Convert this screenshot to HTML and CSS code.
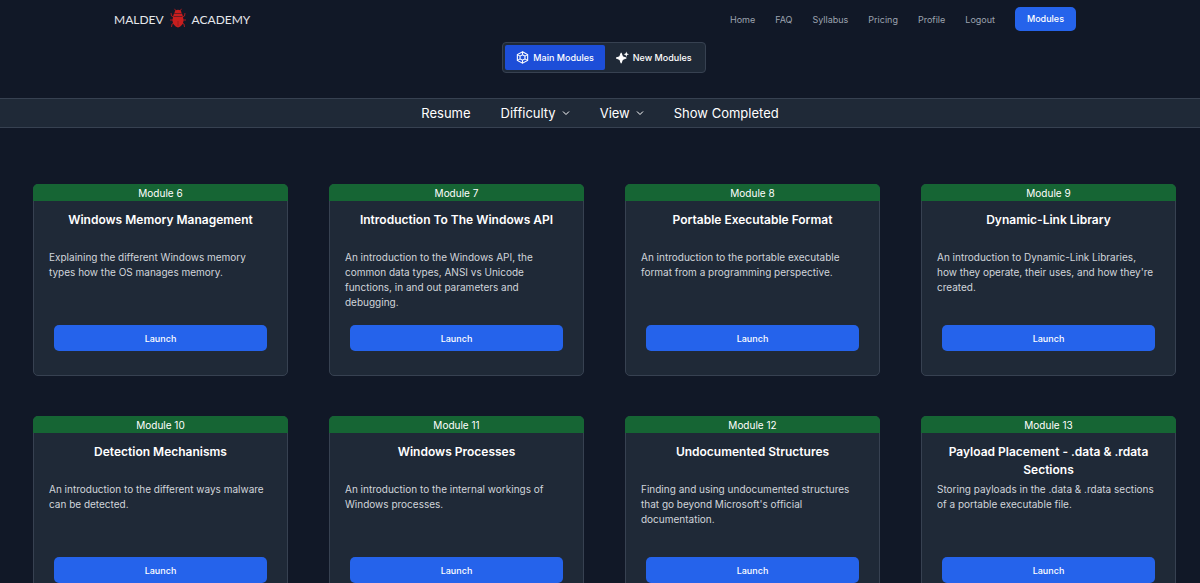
FILE: index.html
```html
<!DOCTYPE html>
<html lang="en">
<head>
    <meta charset="UTF-8">
    <meta name="viewport" content="width=device-width, initial-scale=1.0">
    <title>Maldev Academy - Modules</title>
    <link rel="stylesheet" href="styles.css">
</head>
<body>

    <!-- Header -->
    <header class="navbar">
        <a class="logo" href="#">
            <span>MALDEV</span>
            <svg class="bug" viewBox="0 0 18 20" aria-hidden="true">
                <g fill="none" stroke="#a51c20" stroke-width="1">
                    <path d="M7 3L5.500 0.800M11 3L12.500 0.800"/>
                    <path d="M5 9L2.500 8L2 5M13 9L15.500 8L16 5"/>
                    <path d="M4.500 12H1M13.500 12H17"/>
                    <path d="M5 15L3 16L2.500 19M13 15L15 16L15.500 19"/>
                </g>
                <path fill="#c81e1e" d="M5.500 5C5.500 0.800 12.500 0.800 12.500 5Z"/>
                <path fill="#c81e1e" d="M5 5.500H13L14 8.500H4Z"/>
                <path fill="#c81e1e" d="M4 9H14L14.500 12C14.500 15.500 12.500 18.500 9 19.500C5.500 18.500 3.500 15.500 3.500 12Z"/>
                <path fill="none" stroke="#8b1a20" stroke-width="0.800" d="M9 13V18"/>
            </svg>
            <span>ACADEMY</span>
        </a>
        <nav class="nav-links">
            <a href="#">Home</a>
            <a href="#">FAQ</a>
            <a href="#">Syllabus</a>
            <a href="#">Pricing</a>
            <a href="#">Profile</a>
            <a href="#">Logout</a>
            <a class="nav-button" href="#">Modules</a>
        </nav>
    </header>

    <!-- Main / New switch -->
    <div class="tabs-row">
        <div class="tabs">
            <button type="button" class="tab active">
                <svg class="tab-icon" viewBox="0 0 24 24" fill="none" stroke="currentColor" stroke-width="2" aria-hidden="true">
                    <path d="M12 1.500L21.500 6.700V17.300L12 22.500L2.500 17.300V6.700Z"/>
                    <path d="M12 7L16.500 9.500V14.500L12 17L7.500 14.500V9.500Z"/>
                    <path d="M12 1.500V7M12 17V22.500M2.500 6.700L7.500 9.500M16.500 14.500L21.500 17.300M21.500 6.700L16.500 9.500M7.500 14.500L2.500 17.300"/>
                </svg>
                Main Modules
            </button>
            <button type="button" class="tab">
                <svg class="tab-icon" viewBox="0 0 24 24" fill="currentColor" aria-hidden="true">
                    <path d="M9.500 4L12 10.500L18.500 13L12 15.500L9.500 22L7 15.500L0.500 13L7 10.500Z" stroke="currentColor" stroke-width="2" stroke-linejoin="round"/>
                    <path d="M19 1L20.300 4.700L24 6L20.300 7.300L19 11L17.700 7.300L14 6L17.700 4.700Z"/>
                </svg>
                New Modules
            </button>
        </div>
    </div>

    <!-- Filters -->
    <div class="toolbar">
        <button type="button">Resume</button>
        <button type="button">Difficulty
            <svg class="chevron" viewBox="0 0 8 8" aria-hidden="true"><path d="M1 2.500L4 5.500L7 2.500"/></svg>
        </button>
        <button type="button">View
            <svg class="chevron" viewBox="0 0 8 8" aria-hidden="true"><path d="M1 2.500L4 5.500L7 2.500"/></svg>
        </button>
        <button type="button">Show Completed</button>
    </div>

    <!-- Modules -->
    <main class="modules">
        <article class="card">
            <div class="card-number">Module 6</div>
            <h2>Windows Memory Management</h2>
            <p>Explaining the different Windows memory types how the OS manages memory.</p>
            <button type="button" class="launch">Launch</button>
        </article>
        <article class="card">
            <div class="card-number">Module 7</div>
            <h2>Introduction To The Windows API</h2>
            <p>An introduction to the Windows API, the common data types, ANSI vs Unicode functions, in and out parameters and debugging.</p>
            <button type="button" class="launch">Launch</button>
        </article>
        <article class="card">
            <div class="card-number">Module 8</div>
            <h2>Portable Executable Format</h2>
            <p>An introduction to the portable executable format from a programming perspective.</p>
            <button type="button" class="launch">Launch</button>
        </article>
        <article class="card">
            <div class="card-number">Module 9</div>
            <h2>Dynamic-Link Library</h2>
            <p>An introduction to Dynamic-Link Libraries, how they operate, their uses, and how they're created.</p>
            <button type="button" class="launch">Launch</button>
        </article>
        <article class="card">
            <div class="card-number">Module 10</div>
            <h2>Detection Mechanisms</h2>
            <p>An introduction to the different ways malware can be detected.</p>
            <button type="button" class="launch">Launch</button>
        </article>
        <article class="card">
            <div class="card-number">Module 11</div>
            <h2>Windows Processes</h2>
            <p>An introduction to the internal workings of Windows processes.</p>
            <button type="button" class="launch">Launch</button>
        </article>
        <article class="card">
            <div class="card-number">Module 12</div>
            <h2>Undocumented Structures</h2>
            <p>Finding and using undocumented structures that go beyond Microsoft's official documentation.</p>
            <button type="button" class="launch">Launch</button>
        </article>
        <article class="card">
            <div class="card-number">Module 13</div>
            <h2>Payload Placement - .data &amp; .rdata Sections</h2>
            <p>Storing payloads in the .data &amp; .rdata sections of a portable executable file.</p>
            <button type="button" class="launch">Launch</button>
        </article>
    </main>

</body>
</html>
```
FILE: styles.css
```css
* {
    box-sizing: border-box;
}
body {
    margin: 0;
    font-family: Inter, "Liberation Sans", sans-serif;
    background-color: #111827;
    color: #fff;
}
button {
    font-family: inherit;
    color: inherit;
    border: none;
    background: none;
    padding: 0;
    cursor: pointer;
}
a {
    color: inherit;
    text-decoration: none;
}

/* Header */
.navbar {
    display: flex;
    justify-content: space-between;
    align-items: center;
    height: 38px;
    padding: 0 124px 0 114px;
}
.logo {
    display: flex;
    align-items: center;
    gap: 5px;
    font-family: Lato, sans-serif;
    font-size: 12px;
    color: #e5e7eb;
}
.bug {
    width: 18px;
    height: 20px;
    margin-bottom: 3px;
}
.nav-links {
    display: flex;
    align-items: center;
    gap: 20px;
    font-size: 9px;
    color: #9ca3af;
}
.nav-button {
    padding: 6px 12px;
    border-radius: 5px;
    background-color: #2563eb;
    color: #fff;
    font-weight: 500;
    line-height: 12px;
}

/* Main / New switch */
.tabs-row {
    display: flex;
    justify-content: center;
    padding: 4px 0 25px 8px;
}
.tabs {
    display: flex;
    padding: 2px;
    border: 1px solid #374151;
    border-radius: 4px;
    background-color: #1f2937;
}
.tab {
    display: flex;
    align-items: center;
    gap: 4px;
    height: 25px;
    padding: 0 11px;
    border-radius: 2px;
    font-size: 9px;
    font-weight: 500;
}
.tab.active {
    background-color: #1d4ed8;
}
.tab-icon {
    width: 13px;
    height: 13px;
}

/* Filters */
.toolbar {
    display: flex;
    justify-content: center;
    gap: 30px;
    height: 30px;
    border: solid #374151;
    border-width: 1px 0;
    background-color: #1f2937;
}
.toolbar button {
    display: flex;
    align-items: center;
    gap: 6px;
    font-size: 13px;
}
.chevron {
    width: 8px;
    height: 8px;
    fill: none;
    stroke: currentColor;
}

/* Modules */
.modules {
    display: grid;
    grid-template-columns: repeat(4, 1fr);
    gap: 40px 41px;
    padding: 56px 24px 40px 33px;
}
.card {
    display: flex;
    flex-direction: column;
    border: 1px solid #374151;
    border-radius: 5px;
    background-color: #1f2937;
}
.card-number {
    margin: -1px -1px 0;
    padding-top: 1px;
    border-radius: 5px 5px 0 0;
    background-color: #166534;
    font-size: 10px;
    line-height: 16px;
    text-align: center;
}
.card h2 {
    min-height: 36px;
    margin: 10px 15px 3px;
    font-size: 12px;
    font-weight: 600;
    line-height: 18px;
    text-align: center;
}
.card p {
    min-height: 60px;
    margin: 0 18px 0 15px;
    font-size: 10px;
    line-height: 15px;
    color: #d1d5db;
}
.launch {
    height: 26px;
    margin: 15px 20px 24px;
    border-radius: 5px;
    background-color: #2563eb;
    font-size: 9px;
    font-weight: 500;
}
```
